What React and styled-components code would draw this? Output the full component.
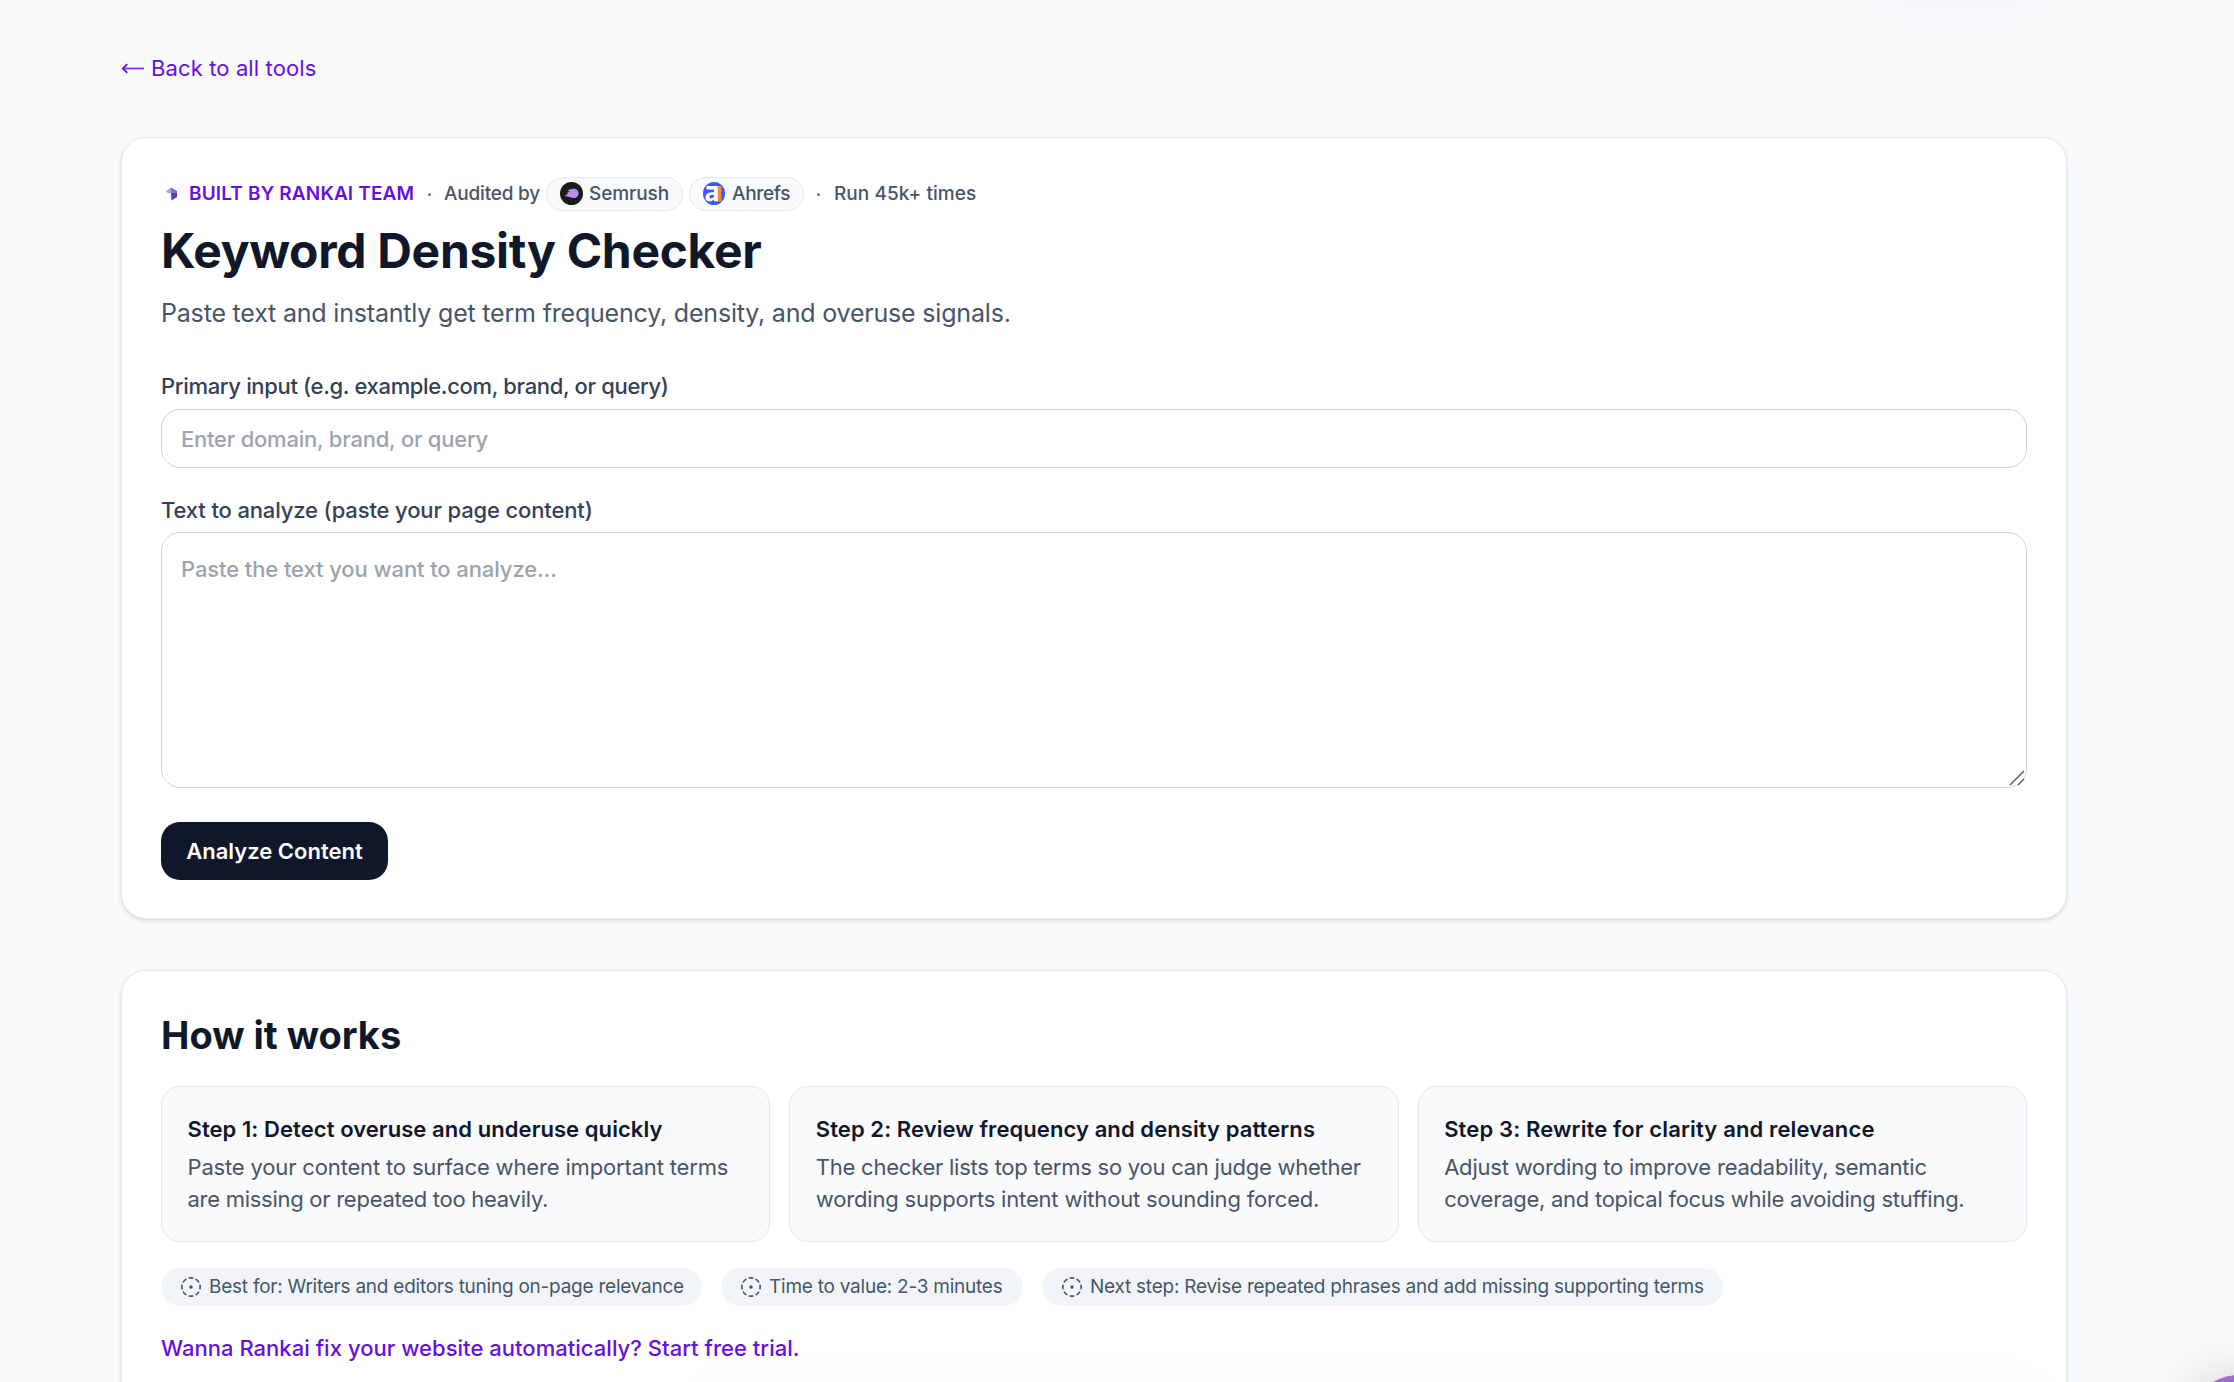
import React, { useState } from "react"
import styled, { createGlobalStyle } from "styled-components"

const GlobalStyle = createGlobalStyle`
  * {
    box-sizing: border-box;
    margin: 0;
    padding: 0;
  }
  body {
    background: #f8fafc;
    color: #0f172a;
    font-family: Inter, "Liberation Sans", sans-serif;
    overflow: hidden;
  }
`;
const Page = styled.main`
  position: relative;
  height: 1382px;
  padding: 52px 167px 0 121px;
  overflow: hidden;
`;
const BackLink = styled.a`
  display: flex;
  align-items: center;
  gap: 7px;
  width: max-content;
  height: 33px;
  margin-bottom: 52px;
  color: #6610e0;
  font-size: 22px;
  line-height: 33px;
  letter-spacing: 0.12px;
  text-decoration: none;
`;
const Card = styled.section`
  height: ${props => props.$height}px;
  margin-bottom: 51px;
  padding: 38px 39px;
  background: #fff;
  border: 1px solid #e2e8f0;
  border-radius: 25px;
  box-shadow: 0 2px 5px rgba(0, 0, 0, 0.1), 0 2px 3px -2px rgba(0, 0, 0, 0.1);
`;
const Meta = styled.div`
  display: flex;
  align-items: center;
  height: 36px;
  color: #475569;
  font-size: 19px;
  font-weight: 500;
`;
const Brand = styled.span`
  width: 225px;
  margin-left: 9px;
  padding-bottom: 2px;
  color: #6610e0;
  font-weight: 600;
  white-space: nowrap;
  letter-spacing: 0.15px;
`;
const MetaText = styled.span`
  width: ${props => props.$width}px;
  padding-bottom: 2px;
  white-space: nowrap;
  letter-spacing: ${props => props.$track || 0}px;
`;
const Dot = styled.span`
  width: 3px;
  height: 3px;
  margin: 1px ${props => props.$right}px 0 ${props => props.$left}px;
  border-radius: 50%;
  background: #64748b;
`;
const Badge = styled.span`
  display: flex;
  align-items: center;
  gap: ${props => props.$gap}px;
  width: ${props => props.$width}px;
  height: 34px;
  margin-right: 6px;
  padding: 0 0 1px 13px;
  border: 1px solid #e2e8f0;
  border-radius: 17px;
  background: #f8fafc;
  letter-spacing: ${props => props.$track || 0}px;
`;
const Title = styled.h1`
  margin-top: 10px;
  font-size: 48px;
  font-weight: 700;
  line-height: 58px;
  letter-spacing: -0.32px;
`;
const Lead = styled.p`
  margin-top: 13px;
  color: #475569;
  font-size: 25px;
  line-height: 40px;
  letter-spacing: -0.19px;
`;
const Label = styled.label`
  display: block;
  margin-top: ${props => props.$top}px;
  color: #334155;
  font-size: 22px;
  font-weight: 500;
  line-height: 32px;
  letter-spacing: ${props => props.$track || 0}px;
`;
const Input = styled.input`
  display: block;
  width: 100%;
  height: 59px;
  margin-top: 7px;
  padding: 0 19px;
  border: 1px solid #cbd5e1;
  border-radius: 19px;
  outline: none;
  background: #fff;
  font: 500 22px/32px Inter, "Liberation Sans", sans-serif;
  letter-spacing: -0.23px;
  &::placeholder {
    color: #9ca3af;
  }
`;
const TextBox = styled.div`
  position: relative;
  margin-top: 6px;
`;
const Textarea = styled.textarea`
  display: block;
  width: 100%;
  height: 256px;
  padding: 20px 19px;
  border: 1px solid #cbd5e1;
  border-radius: 19px;
  outline: none;
  resize: none;
  background: #fff;
  font: 500 22px/32px Inter, "Liberation Sans", sans-serif;
  letter-spacing: -0.1px;
  &::placeholder {
    color: #9ca3af;
  }
`;
const Grip = styled.svg`
  position: absolute;
  right: 2px;
  bottom: 2px;
`;
const Button = styled.button`
  display: block;
  width: 227px;
  height: 58px;
  margin-top: 34px;
  border: none;
  border-radius: 19px;
  background: #0f172a;
  color: #fff;
  font: 600 22px/32px Inter, "Liberation Sans", sans-serif;
  white-space: nowrap;
`;
const Heading = styled.h2`
  font-size: 38px;
  font-weight: 700;
  line-height: 52px;
`;
const Steps = styled.div`
  display: grid;
  grid-template-columns: repeat(3, 1fr);
  gap: 19px;
  margin-top: 25px;
`;
const Step = styled.article`
  height: 156px;
  padding: 25px 0 0 25.5px;
  border: 1px solid #e2e8f0;
  border-radius: 19px;
  background: #f8fafc;
`;
const StepTitle = styled.h3`
  margin-bottom: 5px;
  font-size: 22px;
  font-weight: 600;
  line-height: 34px;
  white-space: nowrap;
  letter-spacing: ${props => props.$track || 0}px;
`;
const StepLine = styled.p`
  color: #475569;
  font-size: 22px;
  line-height: 32px;
  white-space: nowrap;
  letter-spacing: ${props => props.$track || 0}px;
`;
const Chips = styled.div`
  display: flex;
  gap: 19px;
  margin-top: 26px;
`;
const Chip = styled.span`
  display: flex;
  align-items: center;
  gap: 7px;
  width: ${props => props.$width}px;
  height: 38px;
  padding: 0 0 1px 19px;
  border-radius: 19px;
  background: #f1f5f9;
  color: #475569;
  font-size: 19px;
  white-space: nowrap;
  letter-spacing: -0.24px;
`;
const TrialLink = styled.a`
  display: block;
  margin-top: 26px;
  color: #6610e0;
  font-size: 22px;
  font-weight: 500;
  line-height: 32px;
  text-decoration: none;
  letter-spacing: 0.03px;
`;
const HeaderGlow = styled.div`
  position: absolute;
  top: -42px;
  left: 1880px;
  width: 160px;
  height: 30px;
  border-radius: 15px;
  box-shadow: 0 8px 38px rgba(102, 16, 224, 0.04);
`;
const BottomShade = styled.div`
  position: absolute;
  left: 700px;
  bottom: -46px;
  width: 1340px;
  height: 30px;
  border-radius: 15px;
  box-shadow: 0 0 64px rgba(0, 0, 0, 0.05);
`;
const ChatBubble = styled.div`
  position: absolute;
  left: 2190px;
  top: 1375px;
  width: 97px;
  height: 97px;
  border-radius: 50%;
  background: #9b6fd6;
  box-shadow: 0 5px 60px rgba(0, 0, 0, 0.2);
`;

const ArrowIcon = () => (
  <svg width="23" height="11" viewBox="0 0 23 11">
    <path d="M3 5.5H23" stroke="#7d35e5" strokeWidth="1.8" />
    <path d="M6.2 1.2 1.8 5.5 6.2 9.8" fill="none" stroke="#6610e0" strokeWidth="1.8" />
  </svg>
)
const RankaiIcon = () => (
  <svg width="19" height="19" viewBox="0 0 19 19">
    <path d="M5 6 10 2.5 16 6V9L10 8 7 8.5Z" fill="#b9a0dc" />
    <path d="M10 2.5 16 6V12L10 9Z" fill="#8a6cc9" />
    <path d="M10 8 16 8V12L10.5 15.5Z" fill="#5a3db0" />
  </svg>
)
const SemrushIcon = () => (
  <svg width="23" height="23" viewBox="0 0 23 23">
    <circle cx="11.5" cy="11.5" r="11.5" fill="#181e17" />
    <circle cx="14" cy="11.4" r="4.6" fill="#b98cf8" />
    <path d="M14 6.8C11.5 6.8 9.3 7.6 7.2 9L9.8 9 6.5 11.4 8.6 11.5 4 14.1C7.5 14 10.5 15.9 14 16Z" fill="#b98cf8" />
  </svg>
)
const AhrefsIcon = () => (
  <svg width="22" height="23" viewBox="0 0 22 23">
    <ellipse cx="11" cy="11.5" rx="11" ry="11.5" fill="#3f57f2" />
    <path d="M12 4H18.5V19.5H14Z" fill="#f58b2e" />
    <path
      d="M3.5 4H13.2C14.2 4 14.8 4.6 14.8 5.6V19.2H11V17.6C9.8 18.8 8.3 19.4 6.6 19.4 4.1 19.4 2.5 17.8 2.5 15.4 2.5 11.6 5.6 10.3 10.9 10.1V7.4H3.5Z M10.9 12.7C7.8 12.8 6.3 13.5 6.3 15 6.3 16.8 9.2 16.7 10.9 15Z"
      fill="#fff"
      fillRule="evenodd"
    />
  </svg>
)
const DashedIcon = () => (
  <svg width="22" height="22" viewBox="0 0 24 24" fill="none" stroke="#475569" strokeWidth="1.8" strokeLinecap="round">
    <path d="M10.1 2.18a9.93 9.93 0 0 1 3.8 0M17.6 3.71a9.95 9.95 0 0 1 2.69 2.7M21.82 10.1a9.93 9.93 0 0 1 0 3.8M20.29 17.6a9.95 9.95 0 0 1-2.7 2.69M13.9 21.82a9.94 9.94 0 0 1-3.8 0M6.4 20.29a9.95 9.95 0 0 1-2.69-2.7M2.18 13.9a9.93 9.93 0 0 1 0-3.8M3.71 6.4a9.95 9.95 0 0 1 2.7-2.69" />
    <circle cx="12" cy="12" r="1" fill="#475569" />
  </svg>
)

const steps = [
  {
    title: "Step 1: Detect overuse and underuse quickly",
    track: 0.07,
    lines: [
      { text: "Paste your content to surface where important terms", track: -0.16 },
      { text: "are missing or repeated too heavily.", track: -0.27 },
    ],
  },
  {
    title: "Step 2: Review frequency and density patterns",
    track: 0.08,
    lines: [
      { text: "The checker lists top terms so you can judge whether", track: -0.24 },
      { text: "wording supports intent without sounding forced.", track: -0.18 },
    ],
  },
  {
    title: "Step 3: Rewrite for clarity and relevance",
    track: 0.14,
    lines: [
      { text: "Adjust wording to improve readability, semantic", track: -0.21 },
      { text: "coverage, and topical focus while avoiding stuffing.", track: -0.27 },
    ],
  },
]
const chips = [
  { text: "Best for: Writers and editors tuning on-page relevance", width: 541 },
  { text: "Time to value: 2-3 minutes", width: 302 },
  { text: "Next step: Revise repeated phrases and add missing supporting terms", width: 681 },
]

export default () => {
  const [query, setQuery] = useState('')
  const [content, setContent] = useState('')
  return (
    <>
      <GlobalStyle />
      <Page>
        <HeaderGlow />
        <BackLink><ArrowIcon />Back to all tools</BackLink>
        <Card $height={782}>
          <Meta>
            <RankaiIcon />
            <Brand>BUILT BY RANKAI TEAM</Brand>
            <Dot $left={14} $right={13} />
            <MetaText $width={102} $track={-0.2}>Audited by</MetaText>
            <Badge $width={137} $gap={6} $track={-0.1}><SemrushIcon />Semrush</Badge>
            <Badge $width={115} $gap={7} $track={-0.3}><AhrefsIcon />Ahrefs</Badge>
            <Dot $left={7} $right={14} />
            <MetaText $track={0.06}>Run 45k+ times</MetaText>
          </Meta>
          <Title>Keyword Density Checker</Title>
          <Lead>Paste text and instantly get term frequency, density, and overuse signals.</Lead>
          <Label htmlFor="query" $top={37} $track={-0.34}>Primary input (e.g. example.com, brand, or query)</Label>
          <Input
            id="query"
            placeholder="Enter domain, brand, or query"
            value={query}
            onChange={e => setQuery(e.target.value)}
          />
          <Label htmlFor="content" $top={26} $track={-0.14}>Text to analyze (paste your page content)</Label>
          <TextBox>
            <Textarea
              id="content"
              placeholder="Paste the text you want to analyze..."
              value={content}
              onChange={e => setContent(e.target.value)}
            />
            <Grip width="16" height="16" viewBox="0 0 16 16" stroke="#555" strokeWidth="1.4">
              <path d="M1 15 15 1M9 15 15 9" />
            </Grip>
          </TextBox>
          <Button>Analyze Content</Button>
        </Card>
        <Card $height={520}>
          <Heading>How it works</Heading>
          <Steps>
            {steps.map(step => (
              <Step key={step.title}>
                <StepTitle $track={step.track}>{step.title}</StepTitle>
                {step.lines.map(line => (
                  <StepLine key={line.text} $track={line.track}>{line.text}</StepLine>
                ))}
              </Step>
            ))}
          </Steps>
          <Chips>
            {chips.map(chip => (
              <Chip key={chip.text} $width={chip.width}><DashedIcon />{chip.text}</Chip>
            ))}
          </Chips>
          <TrialLink>Wanna Rankai fix your website automatically? Start free trial.</TrialLink>
        </Card>
        <BottomShade />
        <ChatBubble />
      </Page>
    </>
  )
}
